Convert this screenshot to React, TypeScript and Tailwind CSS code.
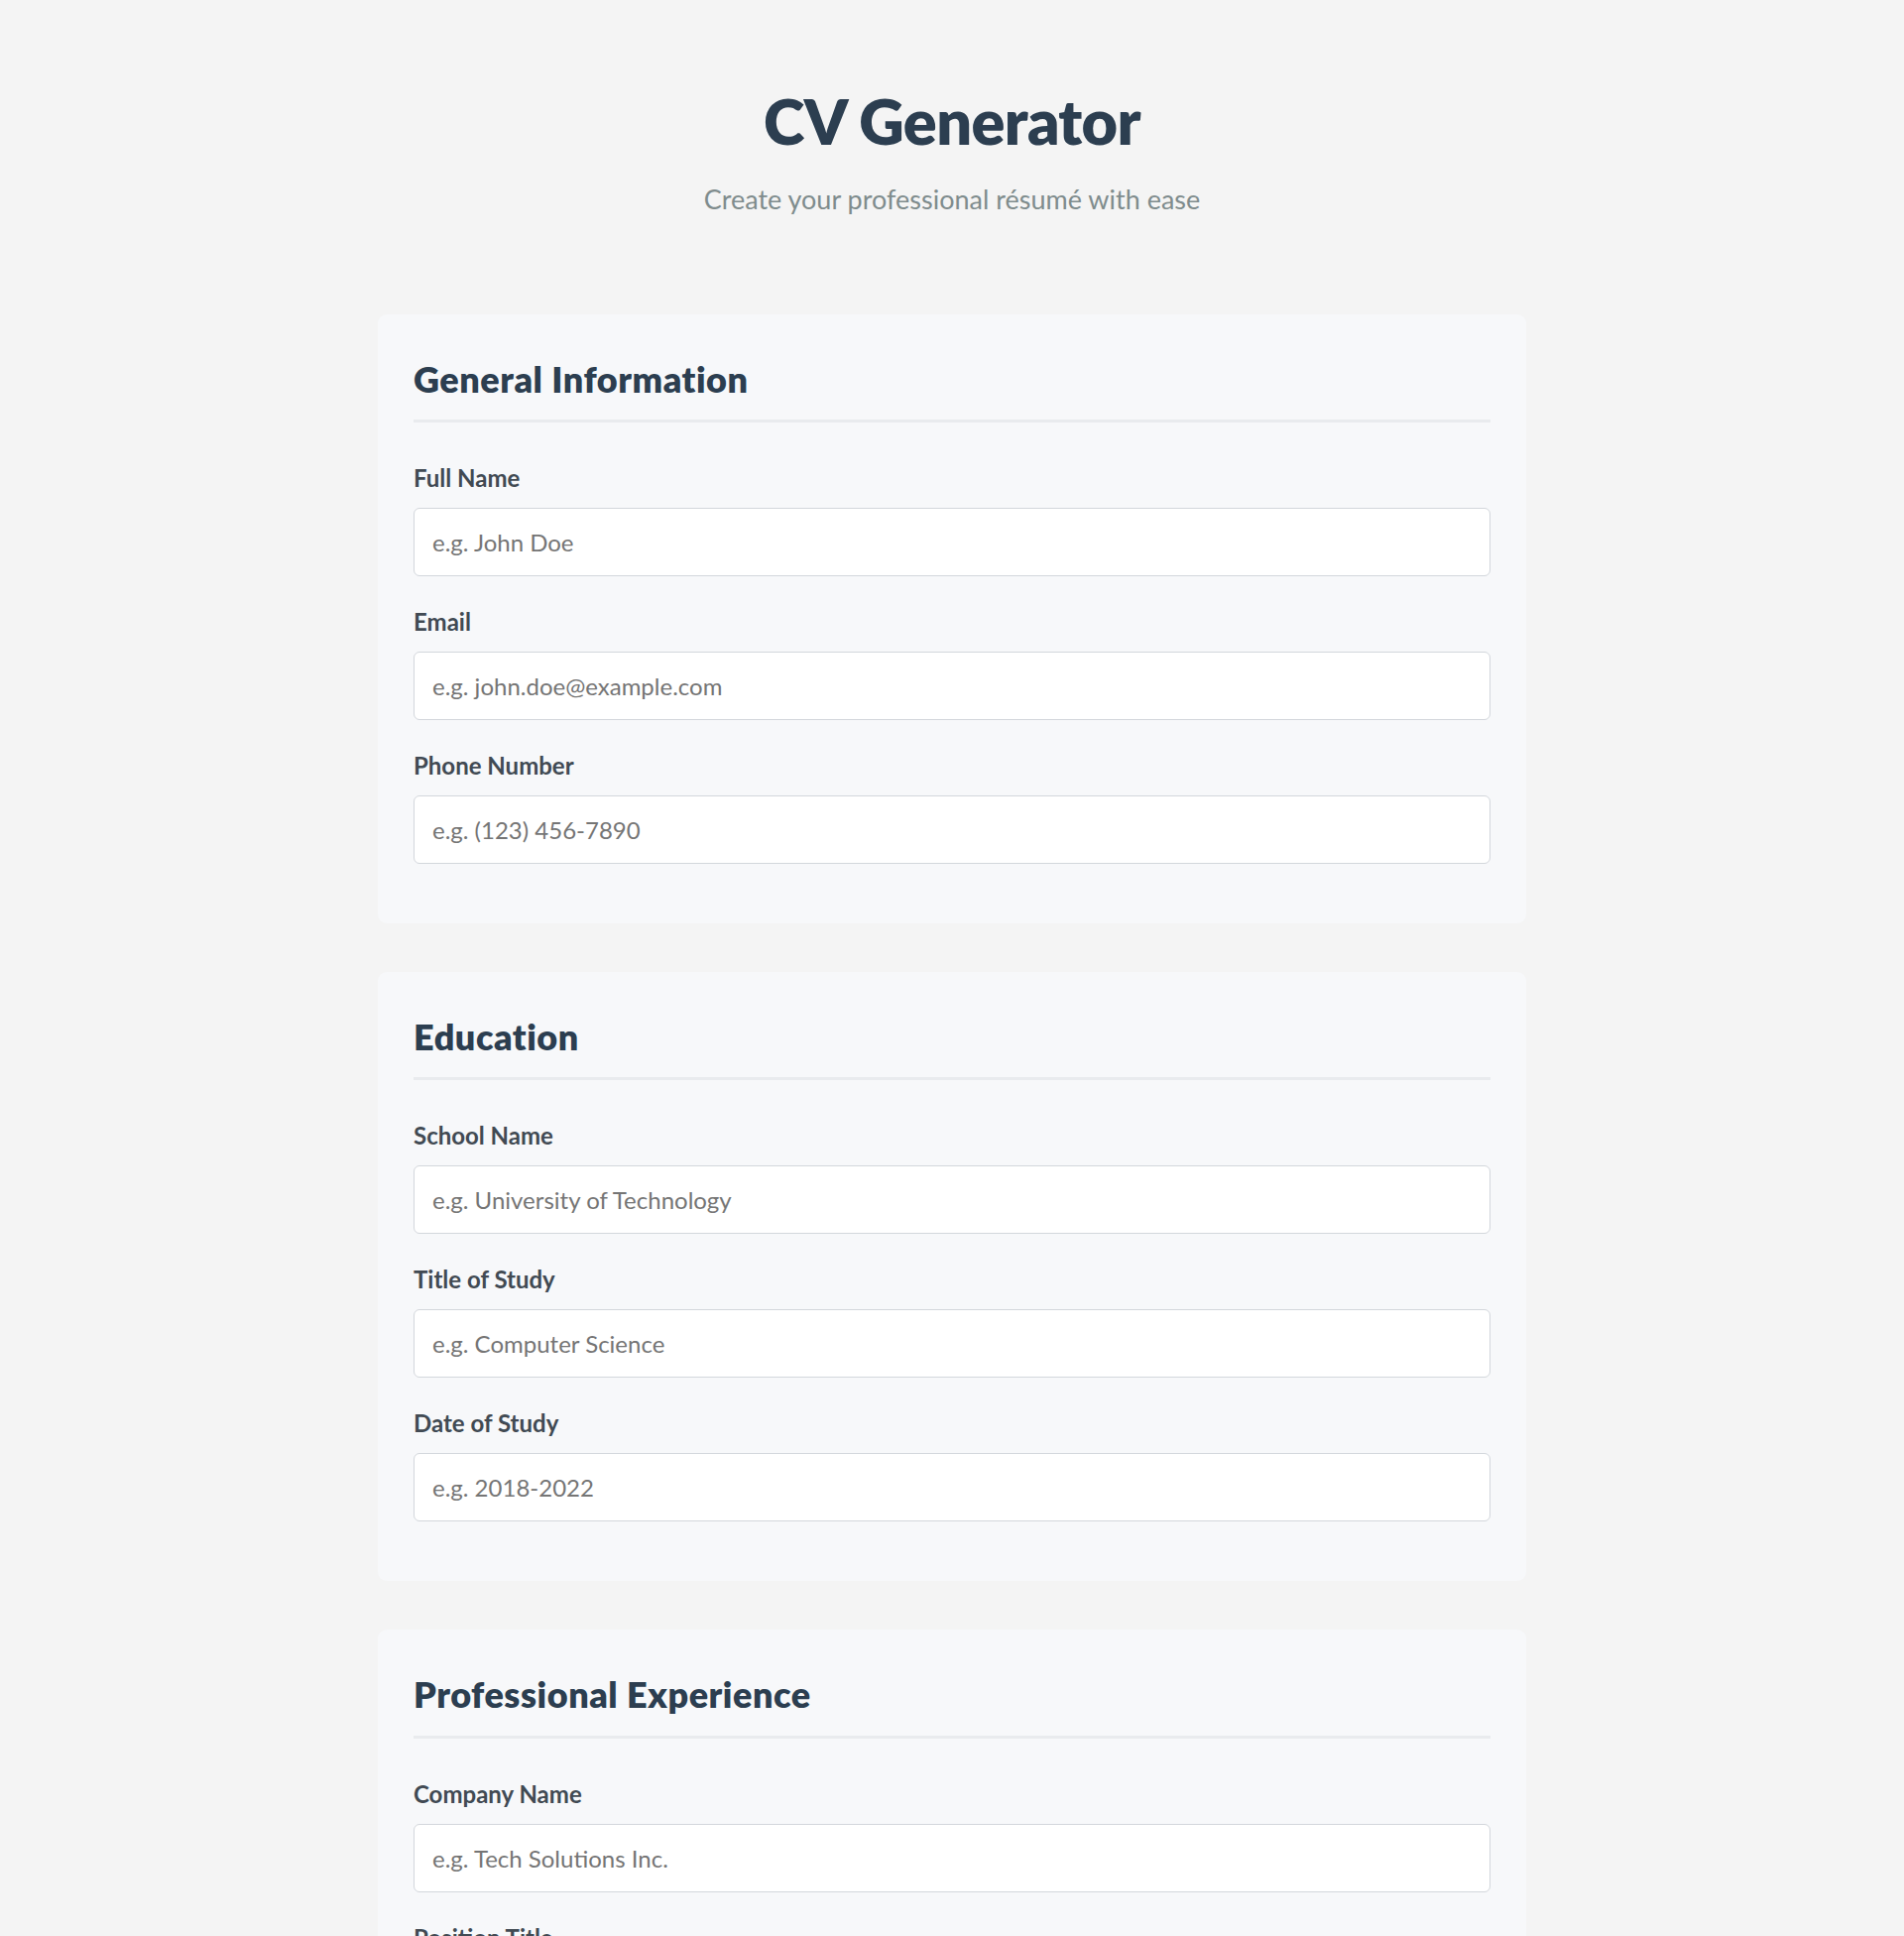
import React from "react";

type Field = { label: string; placeholder: string };
type Section = { title: string; fields: Field[] };

const sections: Section[] = [
  {
    title: "General Information",
    fields: [
      { label: "Full Name", placeholder: "e.g. John Doe" },
      { label: "Email", placeholder: "e.g. john.doe@example.com" },
      { label: "Phone Number", placeholder: "e.g. (123) 456-7890" },
    ],
  },
  {
    title: "Education",
    fields: [
      { label: "School Name", placeholder: "e.g. University of Technology" },
      { label: "Title of Study", placeholder: "e.g. Computer Science" },
      { label: "Date of Study", placeholder: "e.g. 2018-2022" },
    ],
  },
  {
    title: "Professional Experience",
    fields: [
      { label: "Company Name", placeholder: "e.g. Tech Solutions Inc." },
      { label: "Position Title", placeholder: "e.g. Software Engineer" },
      { label: "Main Responsibilities", placeholder: "e.g. Developed web applications" },
      { label: "Date of Employment", placeholder: "e.g. 2022-Present" },
    ],
  },
];

function Card({ section }: { section: Section }) {
  return (
    <section className="w-[1158px] rounded-[9px] bg-[#f7f8fa] px-[36px] pt-[36px] pb-[60px]">
      <h2 className="pt-[8px] pb-[19px] border-b-[3px] border-[#e9ebee] text-[36px] leading-[1.2] font-extrabold tracking-[0.015em] text-[#2c3e50]">
        {section.title}
      </h2>
      <div className="mt-[38px] flex flex-col gap-[28px]">
        {section.fields.map((f) => (
          <div key={f.label} className="flex flex-col">
            <label className="h-[36px] text-[24px] leading-[36px] font-bold text-[#414a53]">
              {f.label}
            </label>
            <input
              type="text"
              placeholder={f.placeholder}
              className="mt-[12px] h-[69px] w-full rounded-[6px] border-[1.5px] border-[#d3d7dc] bg-white px-[18px] text-[24px] text-[#333] placeholder:text-[#757575] outline-none"
            />
          </div>
        ))}
      </div>
    </section>
  );
}

export default function App() {
  return (
    <div className="min-h-screen bg-[#f4f4f4] font-['Lato',sans-serif]">
      <div className="flex flex-col items-center pt-[84px] pb-[60px]">
        <h1 className="text-[63px] leading-[1.2] font-extrabold tracking-[-0.01em] text-[#2c3e50]">CV Generator</h1>
        <p className="mt-[21px] text-[27px] leading-[1.5] text-[#7f8c8d]">
          Create your professional résumé with ease
        </p>
        <div className="mt-[96px] flex flex-col gap-[49px]">
          {sections.map((s) => (
            <Card key={s.title} section={s} />
          ))}
        </div>
      </div>
    </div>
  );
}
